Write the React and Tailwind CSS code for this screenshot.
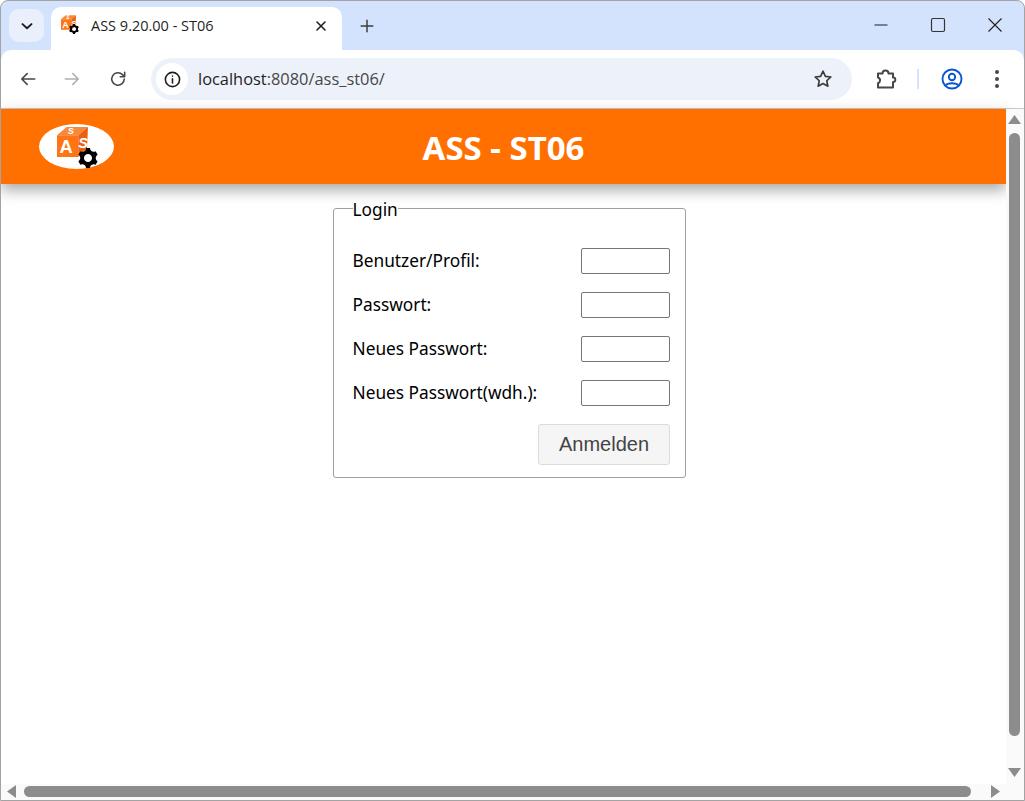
import React from "react";
import { ImCog } from "react-icons/im";

const Cube = ({ className }) => (
  <svg viewBox="0 0 32 31" className={className}>
    <path d="M0 8.5 L10 0 L32 0 L22 8.5 Z" fill="#f58a3c" />
    <path d="M0 8.5 L22 8.5 L22 31 L0 31 Z" fill="#ff7414" />
    <path d="M22 8.5 L32 0 L31 22 L22 31 Z" fill="#ea5f10" />
    <text x="2.5" y="27" fontFamily="'Liberation Sans',sans-serif" fontWeight="700" fontSize="19" fill="#fff">A</text>
    <text x="22" y="22" fontFamily="'Liberation Sans',sans-serif" fontWeight="700" fontStyle="italic" fontSize="15" fill="#fff">S</text>
    <text x="11" y="7.5" fontFamily="'Liberation Sans',sans-serif" fontWeight="700" fontStyle="italic" fontSize="9.5" fill="#fff">S</text>
  </svg>
);

const Icon = ({ size = 24, sw = 2, color = "#474747", children }) => (
  <svg width={size} height={size} viewBox="0 0 24 24" fill="none" stroke={color} strokeWidth={sw} strokeLinecap="round" strokeLinejoin="round">
    {children}
  </svg>
);

const rows = ["Benutzer/Profil:", "Passwort:", "Neues Passwort:", "Neues Passwort(wdh.):"];

export default function App() {
  return (
    <div className="w-[1025px] h-[801px] flex flex-col bg-[#d3e3fd] border border-[#a3a3a3] rounded-t-lg overflow-hidden font-['Noto_Sans',sans-serif] text-black">
      {/* tab strip */}
      <div className="h-[49px] flex items-end shrink-0">
        <div className="ml-[8px] mb-[8px] w-[35px] h-[33px] rounded-[10px] bg-[#e9effb] flex items-center justify-center">
          <Icon size={18} sw={2.6} color="#1f1f1f"><path d="M6 9.5l6 5.5 6-5.5" /></Icon>
        </div>
        <div className="ml-[7px] w-[291px] h-[43px] bg-white rounded-t-[10px] flex items-center pl-[10px] pr-[13px] pb-[5px]">
          <div className="relative w-[22px] h-[22px] shrink-0">
            <Cube className="w-[15px] h-[15px]" />
            <ImCog className="absolute left-[8px] top-[9px] w-[10px] h-[10px] text-black" />
          </div>
          <span className="ml-[8px] text-[14.5px] text-[#1f1f1f] font-['Open_Sans',sans-serif] leading-none">ASS 9.20.00 - ST06</span>
          <span className="ml-auto flex">
            <Icon size={16} sw={2.4} color="#1f1f1f"><path d="M6 6l12 12M18 6L6 18" /></Icon>
          </span>
        </div>
        <div className="ml-[15px] mb-[14px] flex">
          <Icon size={20} sw={1.8} color="#3c3c3c"><path d="M12 5v14M5 12h14" /></Icon>
        </div>
        <div className="ml-auto mb-[15px] flex items-center gap-[37px] pr-[19px]">
          <svg width="20" height="20" viewBox="0 0 20 20" fill="none" stroke="#1f1f1f" strokeWidth="1.2"><path d="M3.5 10h13" /></svg>
          <svg width="20" height="20" viewBox="0 0 20 20" fill="none" stroke="#333" strokeWidth="1.2"><rect x="3.5" y="3.5" width="13" height="13" rx="1.5" /></svg>
          <svg width="20" height="20" viewBox="0 0 20 20" fill="none" stroke="#1f1f1f" strokeWidth="1.1"><path d="M3.5 3.5l13 13M16.5 3.5l-13 13" /></svg>
        </div>
      </div>

      {/* toolbar */}
      <div className="h-[59px] shrink-0 bg-white rounded-t-[10px] border-b border-[#c9c9c9] flex items-center">
        <div className="ml-[17px] flex"><Icon size={20} sw={1.9}><path d="M20 12H5M11 5.5L4.5 12l6.5 6.5" /></Icon></div>
        <div className="ml-[24px] flex"><Icon size={20} sw={1.9} color="#b0b0b0"><path d="M4 12h15M13 5.5l6.5 6.5-6.5 6.5" /></Icon></div>
        <div className="ml-[26px] flex"><Icon size={20} sw={1.9}><path d="M19.5 12a7.5 7.5 0 1 1-2.2-5.3L20 9.3M20 4v5.3h-5.3" /></Icon></div>
        <div className="ml-[23px] w-[701px] h-[42px] rounded-full bg-[#edf2fa] flex items-center pl-[5px] pr-[18px]">
          <div className="w-[32px] h-[32px] rounded-full bg-white flex items-center justify-center">
            <Icon size={19} sw={2} color="#1f1f1f"><circle cx="12" cy="12" r="9" /><path d="M12 11v5.5M12 7.5v.2" /></Icon>
          </div>
          <span className="ml-[10px] text-[16.4px] text-[#1f1f1f] font-['Open_Sans',sans-serif] leading-none">localhost<span className="text-[#474747]">:8080/ass_st06/</span></span>
          <span className="ml-auto flex">
            <Icon size={22} sw={1.8} color="#3c3c3c"><path d="M12 3.5l2.6 5.6 6 .7-4.5 4.1 1.2 6L12 17l-5.3 2.9 1.2-6-4.5-4.1 6-.7z" /></Icon>
          </span>
        </div>
        <div className="ml-[23px] flex">
          <svg width="22" height="22" viewBox="0 0 22 22" fill="none" stroke="#474747" strokeWidth="2" strokeLinejoin="round">
            <path d="M3 5.5h4.5a3 3 0 0 1 6 0h4.5v4a2.3 2.3 0 0 1 0 4.6v5.4H3v-4.3a3 3 0 0 0 0-5.7z" />
          </svg>
        </div>
        <div className="ml-[20px] w-[2px] h-[20px] bg-[#d3e3fd]" />
        <div className="ml-[21px] flex">
          <Icon size={24} sw={1.9} color="#0b57d0"><circle cx="12" cy="12" r="9.5" /><circle cx="12" cy="10" r="3.2" /><path d="M5.5 18.5c2-3 11-3 13 0" /></Icon>
        </div>
        <div className="ml-[31px] flex flex-col gap-[3px]">
          <i className="block w-[4px] h-[4px] rounded-full bg-[#474747]" />
          <i className="block w-[4px] h-[4px] rounded-full bg-[#474747]" />
          <i className="block w-[4px] h-[4px] rounded-full bg-[#474747]" />
        </div>
      </div>

      {/* viewport */}
      <div className="flex-1 min-h-0 flex flex-col bg-white">
        <div className="flex-1 min-h-0 flex">
          <div className="flex-1 min-w-0">
            <header className="h-[75px] bg-[#ff7000] shadow-[0_6px_14px_rgba(0,0,0,0.35)] grid grid-cols-[1fr_auto_1fr] items-center">
              <div className="pl-[38px]">
                <div className="relative w-[75px] h-[45px] rounded-[50%] bg-white">
                  <Cube className="absolute left-[18px] top-[3px] w-[31px] h-[30px]" />
                  <ImCog className="absolute left-[39px] top-[24px] w-[20px] h-[20px] text-black" />
                </div>
              </div>
              <h1 className="pt-[2px] text-[33px] font-bold text-white leading-none font-['Noto_Sans',sans-serif]">ASS - ST06</h1>
              <div />
            </header>
            <fieldset className="ml-[332px] mt-[11px] w-[353px] h-[283px] border border-[#a0a0a0] rounded-[3px] pl-[18.5px] pr-[15px]">
              <legend className="text-[17.3px] leading-[22px] px-0 pt-[4px]">Login</legend>
              <div className="mt-[27px] flex flex-col gap-[18px]">
                {rows.map((r) => (
                  <label key={r} className="flex items-center justify-between h-[26px] text-[17.3px]">
                    <span>{r}</span>
                    <input type="text" className="w-[89px] h-[26px] border border-[#767676] rounded-[2px] bg-white" />
                  </label>
                ))}
              </div>
              <div className="mt-[18px] flex justify-end">
                <button className="w-[132px] h-[41px] bg-[#f5f5f5] border border-[#dcdcdc] rounded-[3px] pb-[2px] text-[20px] text-[#444] font-['Liberation_Sans',sans-serif]">Anmelden</button>
              </div>
            </fieldset>
          </div>
          {/* vertical scrollbar */}
          <div className="w-[18px] shrink-0 bg-[#fafafa] flex flex-col items-center py-[6px] pr-[1px]">
            <svg width="13" height="10" viewBox="0 0 13 10"><path d="M6.5 0l6.5 9H0z" fill="#8c8c8c" /></svg>
            <div className="mt-[8px] w-[11px] h-[603px] rounded-full bg-[#8c8c8c]" />
            <div className="mt-auto"><svg width="13" height="10" viewBox="0 0 13 10"><path d="M6.5 9L0 0h13z" fill="#8c8c8c" /></svg></div>
          </div>
        </div>
        {/* horizontal scrollbar */}
        <div className="h-[16px] shrink-0 bg-[#fafafa] flex items-center pl-[6px] pb-[2px]">
          <svg width="10" height="13" viewBox="0 0 10 13"><path d="M0 6.5l9-6.5v13z" fill="#8c8c8c" /></svg>
          <div className="ml-[7px] w-[947px] h-[11px] rounded-full bg-[#8c8c8c]" />
          <div className="ml-[19px]"><svg width="10" height="13" viewBox="0 0 10 13"><path d="M10 6.5L1 0v13z" fill="#8c8c8c" /></svg></div>
        </div>
      </div>
    </div>
  );
}
